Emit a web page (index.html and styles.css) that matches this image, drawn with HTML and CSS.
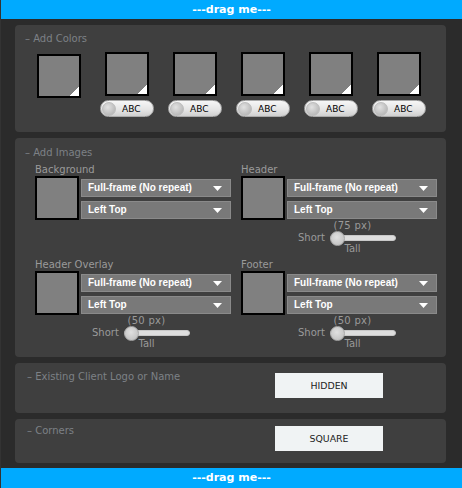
FILE: index.html
```html
<!DOCTYPE html>
<html>
<head>
<meta charset="utf-8">
<link rel="stylesheet" href="styles.css">
</head>
<body>
<div class="app">
  <div class="dragbar">---drag me---</div>

  <section class="panel colors">
    <div class="title">– Add Colors</div>
    <div class="swatches">
      <div class="item first"><div class="swatch"></div></div>
      <div class="item"><div class="swatch"></div><div class="toggle"><span class="knob"></span><span class="abc">ABC</span></div></div>
      <div class="item"><div class="swatch"></div><div class="toggle"><span class="knob"></span><span class="abc">ABC</span></div></div>
      <div class="item"><div class="swatch"></div><div class="toggle"><span class="knob"></span><span class="abc">ABC</span></div></div>
      <div class="item"><div class="swatch"></div><div class="toggle"><span class="knob"></span><span class="abc">ABC</span></div></div>
      <div class="item"><div class="swatch"></div><div class="toggle"><span class="knob"></span><span class="abc">ABC</span></div></div>
    </div>
  </section>

  <section class="panel images">
    <div class="title">– Add Images</div>
    <div class="imggrid">
      <div class="imgcol">
        <div class="label">Background</div>
        <div class="imgrow">
          <div class="imgbox"></div>
          <div class="controls">
            <div class="select"><span class="seltext">Full-frame (No repeat)</span><svg class="arrow" width="9" height="5" viewBox="0 0 9 5"><polygon points="0,0 9,0 4.5,5" fill="#fff"/></svg></div>
            <div class="select"><span class="seltext">Left Top</span><svg class="arrow" width="9" height="5" viewBox="0 0 9 5"><polygon points="0,0 9,0 4.5,5" fill="#fff"/></svg></div>
          </div>
        </div>
      </div>
      <div class="imgcol">
        <div class="label">Header</div>
        <div class="imgrow">
          <div class="imgbox"></div>
          <div class="controls">
            <div class="select"><span class="seltext">Full-frame (No repeat)</span><svg class="arrow" width="9" height="5" viewBox="0 0 9 5"><polygon points="0,0 9,0 4.5,5" fill="#fff"/></svg></div>
            <div class="select"><span class="seltext">Left Top</span><svg class="arrow" width="9" height="5" viewBox="0 0 9 5"><polygon points="0,0 9,0 4.5,5" fill="#fff"/></svg></div>
            <div class="slider">
              <div class="sval">(75 px)</div>
              <div class="srow"><span class="short">Short</span><span class="track"><span class="thumb"></span></span></div>
              <div class="stall">Tall</div>
            </div>
          </div>
        </div>
      </div>
      <div class="imgcol">
        <div class="label">Header Overlay</div>
        <div class="imgrow">
          <div class="imgbox"></div>
          <div class="controls">
            <div class="select"><span class="seltext">Full-frame (No repeat)</span><svg class="arrow" width="9" height="5" viewBox="0 0 9 5"><polygon points="0,0 9,0 4.5,5" fill="#fff"/></svg></div>
            <div class="select"><span class="seltext">Left Top</span><svg class="arrow" width="9" height="5" viewBox="0 0 9 5"><polygon points="0,0 9,0 4.5,5" fill="#fff"/></svg></div>
            <div class="slider">
              <div class="sval">(50 px)</div>
              <div class="srow"><span class="short">Short</span><span class="track"><span class="thumb"></span></span></div>
              <div class="stall">Tall</div>
            </div>
          </div>
        </div>
      </div>
      <div class="imgcol">
        <div class="label">Footer</div>
        <div class="imgrow">
          <div class="imgbox"></div>
          <div class="controls">
            <div class="select"><span class="seltext">Full-frame (No repeat)</span><svg class="arrow" width="9" height="5" viewBox="0 0 9 5"><polygon points="0,0 9,0 4.5,5" fill="#fff"/></svg></div>
            <div class="select"><span class="seltext">Left Top</span><svg class="arrow" width="9" height="5" viewBox="0 0 9 5"><polygon points="0,0 9,0 4.5,5" fill="#fff"/></svg></div>
            <div class="slider">
              <div class="sval">(50 px)</div>
              <div class="srow"><span class="short">Short</span><span class="track"><span class="thumb"></span></span></div>
              <div class="stall">Tall</div>
            </div>
          </div>
        </div>
      </div>
    </div>
  </section>

  <section class="panel option logo">
    <div class="title">– Existing Client Logo or Name</div>
    <div class="btn">HIDDEN</div>
  </section>

  <section class="panel option corners">
    <div class="title">– Corners</div>
    <div class="btn">SQUARE</div>
  </section>

  <div class="dragbar bottom">---drag me---</div>
</div>
</body>
</html>
```

FILE: styles.css
```css
* { box-sizing: border-box; }
html, body { margin: 0; padding: 0; }
body {
  background: #2b2b2b;
  font-family: "DejaVu Sans", sans-serif;
  font-size: 10px;
}
.app {
  width: 462px;
  height: 488px;
  border-left: 1px solid #333333;
  display: flex;
  flex-direction: column;
  overflow: hidden;
}
.dragbar {
  height: 19px;
  background: #00aaff;
  color: #ffffff;
  font-weight: bold;
  font-size: 11px;
  line-height: 19px;
  text-align: center;
}
.dragbar.bottom {
  height: 20px;
  line-height: 20px;
  margin-top: 5px;
}
.panel {
  margin: 6px 0 0 14px;
  width: 431px;
  background: #3f3f3f;
  border-radius: 4px;
}
.title {
  color: #7d8186;
  font-size: 10px;
  line-height: 12px;
  white-space: nowrap;
}

/* colors */
.colors { padding: 8px 0 15px 17px; }
.colors .title { padding-left: -7px; margin-left: -7px; }
.swatches {
  display: flex;
  gap: 14px;
  margin-top: 7px;
}
.item {
  width: 54px;
  display: flex;
  flex-direction: column;
  align-items: center;
  gap: 4px;
}
.item.first { padding-top: 2px; }
.swatch {
  width: 44px;
  height: 44px;
  border: 2px solid #000;
  background: linear-gradient(to bottom right, #808080 calc(100% - 6.4px), #ffffff calc(100% - 6.4px));
}
.toggle {
  width: 54px;
  height: 17px;
  border-radius: 9px;
  border: 1px solid #a9a9a9;
  background: linear-gradient(#f6f6f6, #e4e4e4 60%, #cfcfcf);
  display: flex;
  align-items: center;
  padding-left: 1px;
}
.knob {
  width: 14px;
  height: 14px;
  border-radius: 50%;
  background: radial-gradient(circle at 40% 35%, #e2e2e2, #b9b9b9 75%);
  border: 1px solid #bdbdbd;
}
.abc {
  margin-left: 6px;
  color: #000;
  font-size: 9px;
  line-height: 12px;
}

/* images */
.images { padding: 9px 0 8px 20px; }
.images .title { margin-left: -10px; }
.imggrid {
  margin-top: 5px;
  display: grid;
  grid-template-columns: 206px 206px;
  row-gap: 5px;
}
.label {
  color: #9a9a9a;
  line-height: 12px;
  white-space: nowrap;
}
.imgrow {
  display: flex;
  gap: 2px;
  align-items: flex-start;
}
.imgbox {
  width: 44px;
  height: 44px;
  border: 2px solid #000;
  background: #808080;
  flex: none;
}
.controls {
  width: 150px;
  padding-top: 3px;
  display: flex;
  flex-direction: column;
  gap: 4px;
}
.select {
  height: 18px;
  background: #797979;
  border: 1px solid #8a8a8a;
  display: flex;
  align-items: center;
  padding-left: 6px;
  padding-right: 8px;
}
.seltext {
  flex: 1;
  color: #ffffff;
  font-family: "Liberation Sans", Arial, sans-serif;
  font-weight: bold;
  font-size: 10px;
  line-height: 12px;
  white-space: nowrap;
}
.arrow { flex: none; }
.slider {
  margin-top: -3px;
  padding-left: 11px;
  color: #9a9a9a;
}
.sval {
  width: 109px;
  text-align: center;
  line-height: 12px;
  letter-spacing: 0.3px;
}
.srow {
  height: 12px;
  display: flex;
  align-items: center;
  gap: 5px;
}
.short { line-height: 12px; }
.track {
  position: relative;
  width: 66px;
  height: 6px;
  border-radius: 3px;
  background: #dedede;
  border: 1px solid #c8c8c8;
}
.thumb {
  position: absolute;
  left: -1px;
  top: -5.5px;
  width: 15px;
  height: 15px;
  border-radius: 50%;
  background: radial-gradient(circle at 45% 40%, #e0e0e0, #c2c2c2 80%);
  border: 1px solid #a8a8a8;
}
.stall {
  width: 109px;
  text-align: center;
  line-height: 10px;
}

/* option panels */
.option {
  display: grid;
  grid-template-columns: 260px 108px;
  align-items: start;
}
.option .title { padding-left: 12px; }
.logo { padding: 8px 0 15px 0; }
.logo .btn { margin-top: 2px; }
.corners { padding: 6px 0 12px 0; }
.corners .btn { margin-top: 1px; }
.btn {
  height: 25px;
  background: #f0f3f4;
  color: #222;
  font-size: 9.4px;
  line-height: 25px;
  text-align: center;
}
```
